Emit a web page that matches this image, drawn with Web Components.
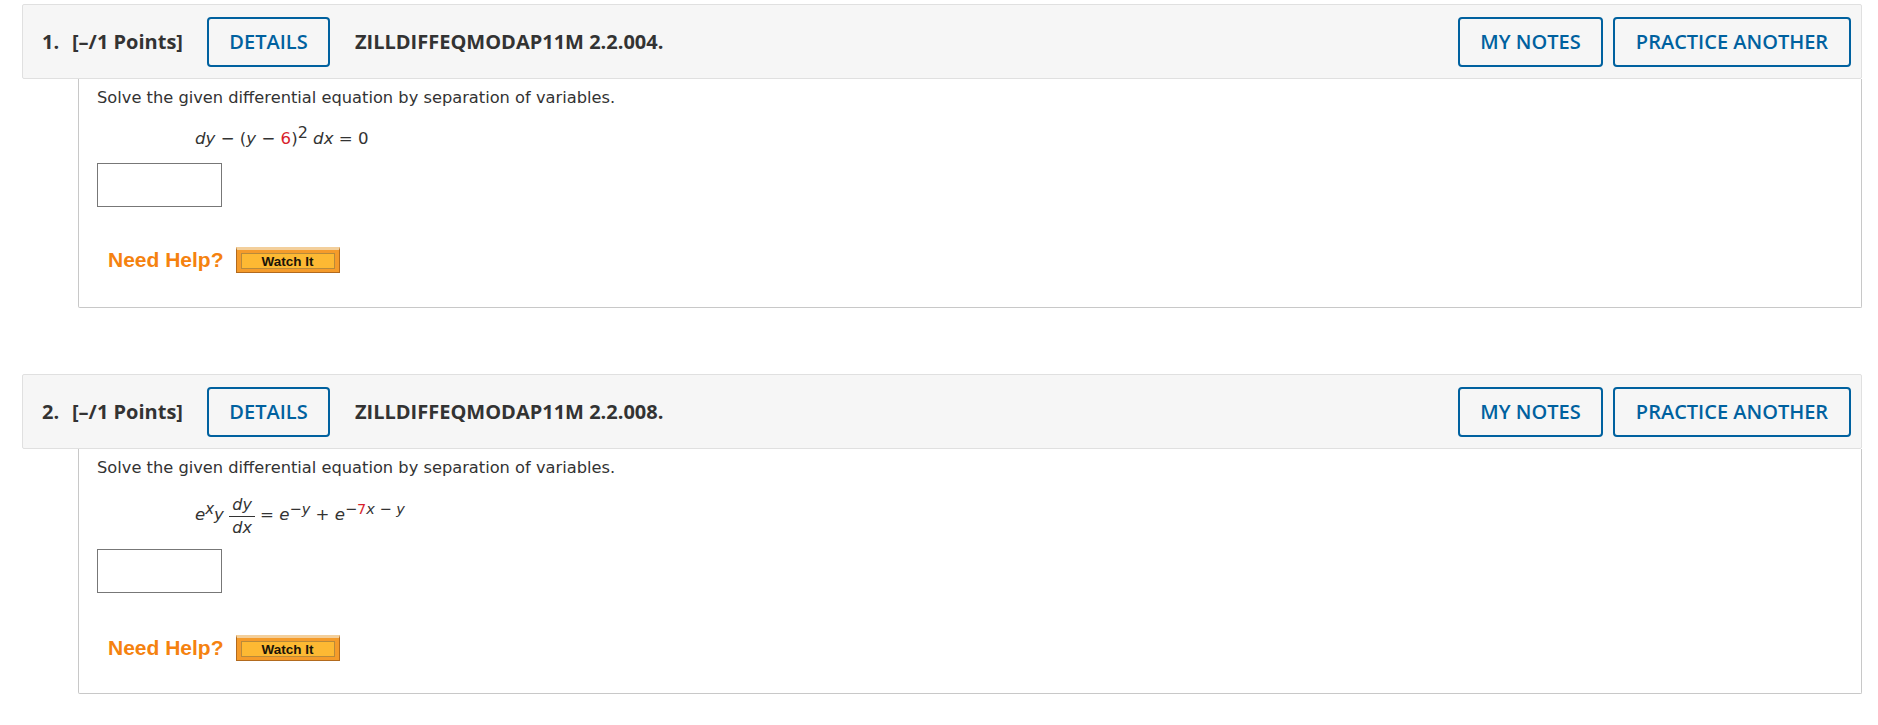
<!DOCTYPE html>
<html>
<head>
<meta charset="utf-8">
<title>Questions</title>
<style>
  html, body { margin: 0; background: #fff; }
  body { padding: 4px 16px 0 22px; font-family: "DejaVu Sans", sans-serif; color: #333; }
</style>
</head>
<body>
<question-card number="1." code="ZILLDIFFEQMODAP11M 2.2.004.">
  <math-line>
    <i>dy</i>&nbsp;&minus;&nbsp;(<i>y</i>&nbsp;&minus;&nbsp;<span style="color:#d81e2c">6</span>)<sup style="font-size:16px;line-height:0;vertical-align:6px">2</sup>&nbsp;<i>dx</i>&nbsp;=&nbsp;0
  </math-line>
</question-card>
<question-card number="2." code="ZILLDIFFEQMODAP11M 2.2.008." style="margin-top:66px" tall>
  <math-line>
    <i>e</i><sup style="font-size:15px;line-height:0;vertical-align:6px;font-style:italic">x</sup><i>y</i>&nbsp;<math-frac><i slot="top">dy</i><i slot="bottom">dx</i></math-frac>&nbsp;=&nbsp;<i>e</i><sup style="font-size:14.5px;line-height:0;vertical-align:6px">&minus;<i>y</i></sup>&nbsp;+&nbsp;<i>e</i><sup style="font-size:14.5px;line-height:0;vertical-align:6px">&minus;<span style="color:#d81e2c">7</span><i>x</i>&nbsp;&minus;&nbsp;<i>y</i></sup>
  </math-line>
</question-card>

<script>
// outlined blue button used in the question header
class BlueButton extends HTMLElement {
  connectedCallback() {
    const shadow = this.attachShadow({mode: "open"});
    shadow.innerHTML = `
      <style>
        :host { display: inline-flex; align-items: center; justify-content: center; box-sizing: border-box;
          height: 50px; border: 2px solid #00619f; border-radius: 4px; color: #00619f;
          font: 600 20px "Open Sans", sans-serif; white-space: nowrap; }
      </style>
      <slot></slot>`;
  }
}
customElements.define("blue-button", BlueButton);

// fraction for the equation, top and bottom go in slots
class MathFrac extends HTMLElement {
  connectedCallback() {
    const shadow = this.attachShadow({mode: "open"});
    shadow.innerHTML = `
      <style>
        :host { display: inline-flex; flex-direction: column; align-items: center; vertical-align: 10px;
          font-size: 16px; }
        div { padding: 0 3px; line-height: 22px; }
        .top { border-bottom: 1px solid #333; }
      </style>
      <div class="top"><slot name="top"></slot></div>
      <div><slot name="bottom"></slot></div>`;
  }
}
customElements.define("math-frac", MathFrac);

// indented line holding the equation
class MathLine extends HTMLElement {
  connectedCallback() {
    const shadow = this.attachShadow({mode: "open"});
    shadow.innerHTML = `
      <style>
        :host { display: block; margin-left: 116px; font: 16.6px/22px "DejaVu Sans", sans-serif; color: #333; white-space: nowrap; }
      </style>
      <slot></slot>`;
  }
}
customElements.define("math-line", MathLine);

// the orange help row
class HelpRow extends HTMLElement {
  connectedCallback() {
    const shadow = this.attachShadow({mode: "open"});
    shadow.innerHTML = `
      <style>
        :host { display: flex; align-items: center; gap: 12px; padding-left: 29px; }
        .need { font: bold 21px "Liberation Sans", sans-serif; color: #f5820f; }
        .watch { box-sizing: border-box; width: 104px; height: 26px; padding: 3px 4px; background: #f59b2a;
          border: 1px solid #b26a1e; border-top: 3px solid #f3cf9b; }
        .watch span { display: flex; align-items: center; justify-content: center; box-sizing: border-box; height: 100%;
          background: #fdb933; border: 1px solid #b98a3a; color: #1a1408;
          font: bold 13.5px "Liberation Sans", sans-serif; }
      </style>
      <div class="need">Need Help?</div>
      <div class="watch"><span>Watch It</span></div>`;
  }
}
customElements.define("help-row", HelpRow);

// one numbered question: grey header bar and the box with the question under it
class QuestionCard extends HTMLElement {
  connectedCallback() {
    const shadow = this.attachShadow({mode: "open"});
    const tall = this.hasAttribute("tall");
    shadow.innerHTML = `
      <style>
        :host { display: block; }
        .head { display: flex; align-items: center; box-sizing: border-box; height: 75px; padding: 0 10px 0 19px;
          background: #f6f6f6; border: 1px solid #e0e0e0; border-radius: 2px; color: #333;
          font: 700 20px "Open Sans", sans-serif; }
        .num { width: 30px; }
        .pts { width: 135px; }
        .code { margin-left: 25px; flex: 1; }
        .details { width: 123px; }
        .notes { width: 145px; margin-right: 10px; }
        .another { width: 238px; }
        .box { box-sizing: border-box; margin-left: 56px; height: ${tall ? 245 : 229}px; padding: 8px 18px 0;
          border: 1px solid #c8c8c8; border-top: 0; border-radius: 0 0 2px 2px; }
        .q { font: 16.25px/22px "DejaVu Sans", sans-serif; color: #333; }
        .eq { margin-top: ${tall ? 15 : 19}px; margin-left: -18px; }
        .ans { box-sizing: border-box; width: 125px; height: 44px; margin-top: ${tall ? 10 : 13}px;
          border: 1px dotted #555; outline: 1px solid #777; outline-offset: -1px; }
        help-row { margin-top: ${tall ? 42 : 40}px; margin-left: -18px; }
      </style>
      <div class="head">
        <span class="num">${this.getAttribute("number")}</span>
        <span class="pts">[&ndash;/1 Points]</span>
        <blue-button class="details">DETAILS</blue-button>
        <span class="code">${this.getAttribute("code")}</span>
        <blue-button class="notes">MY NOTES</blue-button>
        <blue-button class="another">PRACTICE ANOTHER</blue-button>
      </div>
      <div class="box">
        <div class="q">Solve the given differential equation by separation of variables.</div>
        <div class="eq"><slot></slot></div>
        <div class="ans"></div>
        <help-row></help-row>
      </div>`;
  }
}
customElements.define("question-card", QuestionCard);
</script>
</body>
</html>
